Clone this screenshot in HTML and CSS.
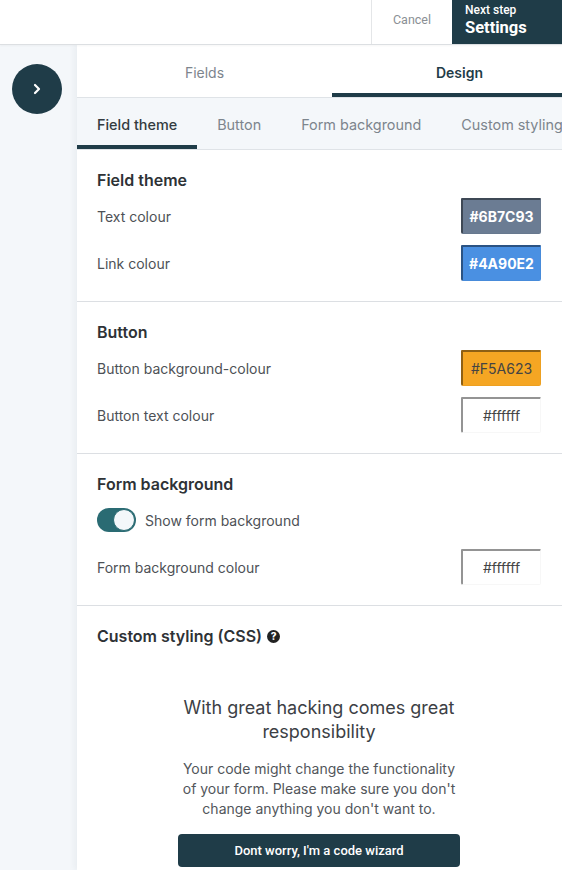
FILE: index.html
```html
<!DOCTYPE html>
<html>
<head>
<meta charset="utf-8">
<link rel="stylesheet" href="styles.css">
</head>
<body>
<div class="app">
  <header class="topbar">
    <div class="spacer"></div>
    <button class="cancel">Cancel</button>
    <button class="next"><span class="next-small">Next step</span><span class="next-big">Settings</span></button>
  </header>
  <div class="main">
    <aside class="sidebar">
      <button class="toggle-side">
        <svg width="12" height="12" viewBox="0 0 12 12"><polyline points="4,2 8,6 4,10" fill="none" stroke="#fff" stroke-width="2.2" stroke-linecap="round" stroke-linejoin="round"/></svg>
      </button>
    </aside>
    <section class="panel">
      <nav class="tabs">
        <div class="tab">Fields</div>
        <div class="tab active">Design</div>
      </nav>
      <nav class="subtabs">
        <div class="subtab active">Field theme</div>
        <div class="subtab">Button</div>
        <div class="subtab">Form background</div>
        <div class="subtab">Custom styling</div>
      </nav>

      <div class="group">
        <h3 class="group-title">Field theme</h3>
        <div class="row">
          <span class="label">Text colour</span>
          <span class="swatch dark" style="background:#6B7C93">#6B7C93</span>
        </div>
        <div class="row">
          <span class="label">Link colour</span>
          <span class="swatch dark" style="background:#4A90E2">#4A90E2</span>
        </div>
      </div>

      <div class="group">
        <h3 class="group-title">Button</h3>
        <div class="row">
          <span class="label">Button background-colour</span>
          <span class="swatch light" style="background:#F5A623">#F5A623</span>
        </div>
        <div class="row">
          <span class="label">Button text colour</span>
          <span class="swatch light" style="background:#ffffff">#ffffff</span>
        </div>
      </div>

      <div class="group">
        <h3 class="group-title">Form background</h3>
        <div class="row">
          <label class="switch-line"><span class="switch"><span class="knob"></span></span><span class="label">Show form background</span></label>
        </div>
        <div class="row">
          <span class="label">Form background colour</span>
          <span class="swatch light" style="background:#ffffff">#ffffff</span>
        </div>
      </div>

      <div class="group custom">
        <h3 class="group-title">Custom styling (CSS) <span class="help">?</span></h3>
        <div class="notice">
          <h2 class="notice-title">With great hacking comes great responsibility</h2>
          <p class="notice-text">Your code might change the functionality of your form. Please make sure you don't change anything you don't want to.</p>
          <button class="wizard">Dont worry, I'm a code wizard</button>
        </div>
      </div>
    </section>
  </div>
</div>
</body>
</html>
```
FILE: styles.css
```css
* { box-sizing: border-box; }
html, body { margin: 0; padding: 0; }
body {
  font-family: Inter, "Noto Sans", sans-serif;
  color: #333;
  background: #fff;
}
.app {
  width: 562px;
  height: 870px;
  overflow: hidden;
  display: flex;
  flex-direction: column;
}
button { font: inherit; border: 0; background: none; padding: 0; cursor: pointer; }

/* top bar */
.topbar {
  height: 45px;
  flex: none;
  display: flex;
  border-bottom: 1px solid #dcdfe2;
  box-shadow: 0 1px 2px rgba(0,0,0,0.04);
  background: #fff;
  position: relative;
  z-index: 2;
}
.spacer { flex: 1; }
.cancel {
  width: 81px;
  border-left: 1px solid #e4e6e8;
  font-family: Roboto, "Liberation Sans", sans-serif;
  font-size: 12.5px;
  color: #8a8f94;
  padding-bottom: 6px;
}
.next {
  width: 110px;
  background: #1f3c48;
  color: #fff;
  font-family: Roboto, "Liberation Sans", sans-serif;
  display: flex;
  flex-direction: column;
  align-items: flex-start;
  justify-content: flex-start;
  padding: 3px 0 0 13px;
  text-align: left;
}
.next-small { font-size: 12px; font-weight: 500; line-height: 15px; }
.next-big { font-size: 16.5px; font-weight: 700; line-height: 19px; }

/* main */
.main { flex: 1; display: flex; min-height: 0; }
.sidebar {
  width: 77px;
  flex: none;
  background: #f4f7fa;
  padding: 19px 0 0 12px;
  display: flex;
  justify-content: flex-start;
  align-items: flex-start;
}
.toggle-side {
  width: 50px;
  height: 50px;
  border-radius: 50%;
  background: #1f3c48;
  display: flex;
  align-items: center;
  justify-content: center;
}
.panel {
  flex: 1;
  min-width: 0;
  overflow: hidden;
  background: #fff;
  box-shadow: -3px 0 6px rgba(30,50,70,0.05);
  position: relative;
  z-index: 1;
}

/* tabs */
.tabs {
  display: grid;
  grid-template-columns: 255px 255px;
  width: 510px;
  border-bottom: 1px solid #dfe3e7;
}
.tab {
  text-align: center;
  font-size: 14px;
  line-height: 20px;
  padding: 18px 0 10px;
  border-bottom: 4px solid transparent;
  color: #7d858d;
}
.tab.active {
  color: #1f3c48;
  font-weight: 600;
  border-bottom-color: #1f3c48;
}
.subtabs {
  display: flex;
  white-space: nowrap;
  background: #f4f7fa;
  border-bottom: 1px solid #dfe3e7;
}
.subtab {
  flex: none;
  font-size: 14.4px;
  line-height: 20px;
  padding: 17px 20px 10px;
  border-bottom: 4px solid transparent;
  color: #7d858d;
}
.subtab.active {
  color: #333b40;
  font-weight: 500;
  border-bottom-color: #1f3c48;
}

/* groups */
.group {
  padding: 20px 21px 20px 20px;
  border-bottom: 1px solid #dcdfe3;
}
.group-title {
  margin: 0 0 8px;
  font-size: 16px;
  line-height: 20px;
  font-weight: 600;
  color: #2e3236;
  display: flex;
  align-items: center;
  gap: 5px;
}
.row {
  height: 36px;
  display: flex;
  align-items: center;
  justify-content: space-between;
}
.row + .row { margin-top: 11px; }
.label {
  font-size: 14px;
  color: #4d5156;
}
.swatch {
  width: 80px;
  height: 36px;
  display: flex;
  align-items: center;
  justify-content: center;
  font-size: 14px;
  border-top: 2px solid rgba(0,0,0,0.42);
  border-left: 2px solid rgba(0,0,0,0.42);
  border-right: 1px solid rgba(0,0,0,0.03);
  border-bottom: 1px solid rgba(0,0,0,0.03);
  border-radius: 1px 1px 2px 2px;
}
.swatch.dark { color: #fff; font-weight: 700; }
.swatch.light { color: #444; font-weight: 400; }

/* switch */
.switch-line { display: flex; align-items: center; gap: 9px; }
.switch {
  width: 39px;
  height: 24px;
  border-radius: 12px;
  background: #2a6b73;
  display: flex;
  align-items: center;
  justify-content: flex-end;
  padding: 1px;
}
.knob {
  width: 22px;
  height: 22px;
  border-radius: 50%;
  background: #f3f7fa;
  border: 1px solid #2a6b73;
}

/* custom */
.custom { border-bottom: 0; }
.help {
  width: 13px;
  height: 13px;
  border-radius: 50%;
  background: #222;
  color: #fff;
  font-size: 10px;
  font-weight: 800;
  line-height: 13px;
  text-align: center;
  display: inline-block;
}
.notice {
  width: 282px;
  margin: 50px auto 0;
  text-align: center;
}
.notice-title {
  margin: 0;
  font-size: 18px;
  line-height: 24px;
  font-weight: 400;
  color: #3c4045;
}
.notice-text {
  margin: 15px 0 15px;
  font-size: 14px;
  line-height: 20px;
  color: #52565b;
}
.wizard {
  width: 282px;
  height: 33px;
  border-radius: 4px;
  background: #1f3c48;
  color: #fff;
  font-family: Roboto, "Liberation Sans", sans-serif;
  font-size: 13px;
  font-weight: 500;
}
```
